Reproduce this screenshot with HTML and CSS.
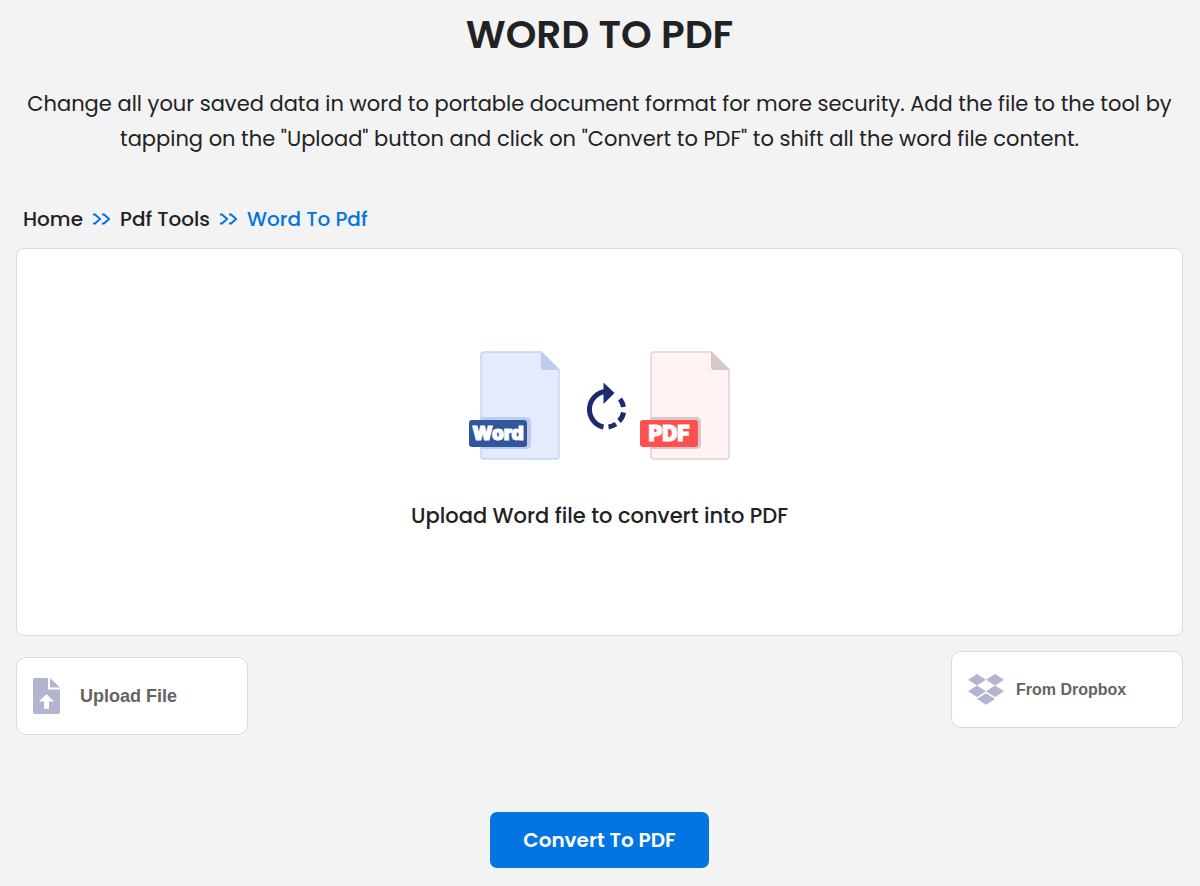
FILE: index.html
```html
<!DOCTYPE html>
<html lang="en">
<head>
<meta charset="utf-8">
<meta name="viewport" content="width=device-width, initial-scale=1">
<title>Word To PDF</title>
<link rel="stylesheet" href="styles.css">
</head>
<body>
<main class="page">
  <h1 class="title">WORD TO PDF</h1>
  <p class="intro">Change all your saved data in word to portable document format for more security. Add the file to the tool by tapping on the "Upload" button and click on "Convert to PDF" to shift all the word file content.</p>
  <nav class="crumbs" aria-label="Breadcrumb">
    <a class="crumb" href="#">Home</a>
    <svg class="chevrons" viewBox="0 0 17 12" aria-hidden="true"><path d="M0 1.500H2L7 6L2 10.500H0M9 1.500H11L16 6L11 10.500H9"/></svg>
    <a class="crumb" href="#">Pdf Tools</a>
    <svg class="chevrons" viewBox="0 0 17 12" aria-hidden="true"><path d="M0 1.500H2L7 6L2 10.500H0M9 1.500H11L16 6L11 10.500H9"/></svg>
    <a class="crumb crumb-current" href="#" aria-current="page">Word To Pdf</a>
  </nav>
  <section class="drop">
    <svg class="art" viewBox="0 0 262 112" role="img" aria-label="Word to PDF">
      <path d="M15 2H72L90 20V106Q90 109 87 109H15Q12 109 12 106V5Q12 2 15 2Z" fill="#e4ebfc" stroke="#c3d5f5" stroke-width="1.500"/>
      <path d="M72 1L91 20H75Q72 20 72 17Z" fill="#bccdf0"/>
      <path d="M12 67H57Q62 67 62 72V94Q62 99 57 99H12Z" fill="#bccdf0"/>
      <rect x="0" y="70" width="58" height="27" rx="3" fill="#31569d"/>
      <text class="badge" x="29" y="90">Word</text>
      <path d="M185 2H242L260 20V106Q260 109 257 109H185Q182 109 182 106V5Q182 2 185 2Z" fill="#fff4f3" stroke="#e5d2d3" stroke-width="1.500"/>
      <path d="M242 1L261 20H245Q242 20 242 17Z" fill="#d9c7c8"/>
      <path d="M182 67H227Q232 67 232 72V94Q232 99 227 99H182Z" fill="#d9c7c8"/>
      <rect x="171" y="70" width="58" height="27" rx="3" fill="#ff5050"/>
      <text class="badge badge-pdf" x="200" y="91">PDF</text>
      <g fill="none" stroke="#1c2b70" stroke-width="5">
        <path d="M137 41.500A18 18 0 0 0 134.500 77"/>
        <path d="M139.500 77Q143 76.500 147 74"/>
        <path d="M150 71Q153.500 68 154.500 62.500"/>
        <path d="M154.500 57Q153.500 52 151 49"/>
      </g>
      <path d="M134.500 32.500L145.500 43L134.500 54Z" fill="#1c2b70"/>
    </svg>
    <p class="prompt">Upload Word file to convert into PDF</p>
  </section>
  <div class="sources">
    <button class="source source-upload" type="button">
      <svg class="file-icon" viewBox="0 0 27 36" aria-hidden="true"><path fill="#b3b5cf" d="M2 0H15V11.500H27V34Q27 36 25 36H2Q0 36 0 34V2Q0 0 2 0ZM17 0L27 9.500H17ZM13.500 16L6 23.500H11V30Q11 31 12 31H15Q16 31 16 30V23.500H21Z" fill-rule="evenodd"/></svg>
      Upload File
    </button>
    <button class="source source-dropbox" type="button">
      <svg class="dropbox-icon" viewBox="0 0 36 31" aria-hidden="true"><path fill="#b3b5cf" d="M9 0L18 5.800L9 11.500L0 5.800ZM27 0L36 5.800L27 11.500L18 5.800ZM9 11.500L18 17.300L9 23L0 17.300ZM27 11.500L36 17.300L27 23L18 17.300ZM18 19.200L27 25L18 30.800L9 25Z"/></svg>
      From Dropbox
    </button>
  </div>
  <button class="convert" type="button">Convert To PDF</button>
</main>
</body>
</html>
```
FILE: styles.css
```css
* { box-sizing: border-box; }
body {
  margin: 0;
  background: #f3f3f3;
  color: #212223;
  font-family: Poppins, Inter, sans-serif;
}
.page {
  display: flex;
  flex-direction: column;
  padding: 8px 17px 18px 16px;
}
.title {
  margin: 0;
  font-size: 39px;
  line-height: 54px;
  font-weight: 600;
  text-align: center;
}
.intro {
  margin: 24px 0 0;
  font-size: 21px;
  line-height: 35px;
  font-weight: 400;
  text-align: center;
}
.crumbs {
  display: flex;
  align-items: center;
  gap: 10px;
  margin-top: 48px;
  padding: 0 7px;
  font-size: 20px;
  line-height: 30px;
  font-weight: 500;
}
.crumb { color: #212223; text-decoration: none; }
.crumb-current { color: #0275e0; }
.chevrons {
  width: 17px;
  height: 12px;
  fill: none;
  stroke: #0275e0;
  stroke-width: 2;
}
.drop {
  display: flex;
  flex-direction: column;
  align-items: center;
  margin-top: 14px;
  padding: 101px 16px 103px;
  background: #fff;
  border: 1px solid #dcdcdc;
  border-radius: 8px;
}
.art { width: 262px; height: 112px; }
.badge {
  font-family: Inter, sans-serif;
  font-size: 19px;
  font-weight: 900;
  fill: #fff;
  stroke: #fff;
  stroke-width: 1px;
  text-anchor: middle;
}
.badge-pdf { font-size: 21px; }
.prompt {
  margin: 38px 0 0;
  font-size: 21px;
  line-height: 32px;
  font-weight: 500;
}
.sources {
  display: flex;
  justify-content: space-between;
  align-items: flex-start;
  margin-top: 15px;
}
.source {
  display: flex;
  align-items: center;
  width: 232px;
  height: 77px;
  padding: 0 16px;
  background: #fff;
  border: 1px solid #d9d9d9;
  border-radius: 10px;
  color: #646464;
  font-family: "Liberation Sans", Arial, sans-serif;
  font-weight: 700;
}
.source-upload { gap: 20px; height: 78px; margin-top: 6px; font-size: 18px; }
.source-dropbox { gap: 12px; font-size: 16px; }
.file-icon { width: 27px; height: 36px; }
.dropbox-icon { width: 36px; height: 31px; }
.convert {
  align-self: center;
  width: 219px;
  height: 56px;
  margin-top: 77px;
  padding: 0;
  background: #0275e0;
  border: 0;
  border-radius: 7px;
  color: #fff;
  font-family: inherit;
  font-size: 20px;
  font-weight: 600;
}
```
